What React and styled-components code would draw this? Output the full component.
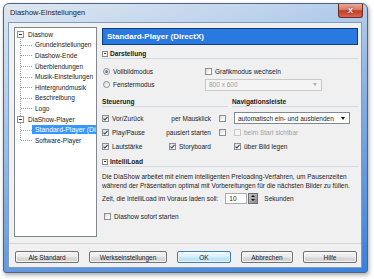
import styled, { createGlobalStyle } from 'styled-components';

const GlobalStyle = createGlobalStyle`
  html, body {
    margin: 0;
    padding: 0;
    background: #ffffff;
  }
  body {
    font-family: 'Liberation Sans', Arial, sans-serif;
    font-size: 6.5px;
    color: #1a1a1a;
  }
  * {
    box-sizing: border-box;
  }
`;

const Screen = styled.div`
  width: 374px;
  height: 279px;
  padding: 3px 0 0 3px;
  background: #ffffff;
`;

const Window = styled.div`
  width: 365px;
  height: 270px;
  display: flex;
  flex-direction: column;
  border: 1px solid #4f6581;
  border-radius: 6px 6px 3px 3px;
  background: linear-gradient(165deg, #dfe7f1 0%, #bcd2ec 22%, #80abe2 55%, #3a80da 100%);
  box-shadow: 1px 2px 4px rgba(0, 0, 0, 0.35);
`;

const TitleBar = styled.div`
  height: 18px;
  display: flex;
  align-items: flex-start;
  justify-content: space-between;
  padding-left: 6px;
`;

const TitleText = styled.span`
  font-size: 7.4px;
  line-height: 18px;
  color: #1b1b1b;
`;

const CloseButton = styled.div`
  width: 25px;
  height: 14px;
  margin-right: 4px;
  display: flex;
  align-items: center;
  justify-content: center;
  border: 1px solid #6b2a22;
  border-top: none;
  border-radius: 0 0 3px 3px;
  background: linear-gradient(#e9a896 0%, #d67a66 45%, #c23a28 52%, #d8664f 100%);
  color: #ffffff;
  font-weight: bold;
  font-size: 8px;
  text-shadow: 0 0 2px #6b1a10;
`;

const Client = styled.div`
  width: 354px;
  height: 246px;
  margin-left: 4px;
  display: flex;
  flex-direction: column;
  border: 1px solid #7f9cc2;
  background: #f0f0f0;
`;

const MainArea = styled.div`
  display: flex;
  gap: 5px;
  padding: 4px 3px 0 5px;
`;

/* ---------- tree ---------- */

const Tree = styled.div`
  position: relative;
  width: 83px;
  height: 210px;
  flex-shrink: 0;
  padding-top: 1px;
  background: #ffffff;
  border: 1px solid #828790;
  overflow: hidden;
  &::before {
    content: '';
    position: absolute;
    left: 5px;
    top: 6px;
    height: 106px;
    border-left: 1px dotted #a0a0a0;
  }
`;

const TreeRoot = styled.div`
  position: relative;
  height: 10.6px;
  display: flex;
  align-items: center;
  gap: 4px;
  padding-left: 2px;
  white-space: nowrap;
`;

const ExpandBox = styled.span`
  position: relative;
  z-index: 1;
  width: 7px;
  height: 7px;
  display: inline-flex;
  align-items: center;
  justify-content: center;
  border: 1px solid #919191;
  background: #ffffff;
  &::after {
    content: '';
    width: 3px;
    height: 1px;
    background: #333333;
  }
`;

const TreeLeaf = styled.div`
  position: relative;
  height: 10.6px;
  display: flex;
  align-items: center;
  padding-left: 20px;
  white-space: nowrap;
  &::before {
    content: '';
    position: absolute;
    left: 6px;
    top: 50%;
    width: 11px;
    border-top: 1px dotted #a0a0a0;
  }
`;

const LeafLabel = styled.span`
  display: block;
  flex: 1;
  overflow: hidden;
  line-height: 9px;
  padding: 0 3px;
  margin-left: -3px;
  font-size: ${(p) => (p.$selected ? '6.9px' : 'inherit')};
  background: ${(p) => (p.$selected ? '#3399ff' : 'transparent')};
  color: ${(p) => (p.$selected ? '#ffffff' : '#1a1a1a')};
`;

/* ---------- content ---------- */

const Content = styled.div`
  width: 256px;
  margin-top: 1px;
  display: flex;
  flex-direction: column;
`;

const PageHeader = styled.div`
  height: 17px;
  padding-left: 4px;
  border: 1px solid #0e3f85;
  background: #2a79e0;
  color: #ffffff;
  font-size: 8px;
  font-weight: bold;
  line-height: 15px;
`;

const SectionTitle = styled.div`
  height: 10px;
  margin-top: ${(p) => p.$mt || 0}px;
  display: flex;
  align-items: center;
  gap: 2px;
  border-bottom: 1px solid #d2d8e0;
  font-size: 6.6px;
  font-weight: bold;
  color: #1a1a1a;
`;

const SmallBox = styled.span`
  width: 6px;
  height: 6px;
  display: inline-flex;
  align-items: center;
  justify-content: center;
  border: 1px solid #8a8a8a;
  background: #ffffff;
  &::after {
    content: '';
    width: 2px;
    height: 1px;
    background: #333333;
  }
`;

const DisplayGrid = styled.div`
  margin-top: 6px;
  display: grid;
  grid-template-columns: 103px 116px;
  grid-auto-rows: 13px;
  align-items: center;
`;

const TwoColumns = styled.div`
  margin-top: 6px;
  display: grid;
  grid-template-columns: 126px 126px;
  column-gap: 4px;
`;

const Column = styled.div`
  display: flex;
  flex-direction: column;
`;

const Rows = styled.div`
  margin-top: 4px;
  display: flex;
  flex-direction: column;
`;

const Row = styled.div`
  height: 14px;
  display: flex;
  align-items: center;
  justify-content: ${(p) => p.$justify || 'flex-start'};
  padding-right: ${(p) => p.$pr || 0}px;
`;

const Item = styled.label`
  display: inline-flex;
  align-items: center;
  gap: 3px;
  width: ${(p) => (p.$w ? `${p.$w}px` : 'auto')};
  margin-left: ${(p) => p.$ml || 0}px;
  color: ${(p) => (p.$disabled ? '#a0a0a0' : '#1a1a1a')};
  white-space: nowrap;
`;

const SideLabel = styled.span`
  display: inline-flex;
  align-items: center;
  gap: 8px;
  white-space: nowrap;
`;

const CheckBox = styled.span`
  width: 7px;
  height: 7px;
  flex-shrink: 0;
  display: inline-flex;
  align-items: center;
  justify-content: center;
  border: 1px solid ${(p) => (p.$disabled ? '#c8c8c8' : '#8e8f8f')};
  background: ${(p) =>
    p.$disabled ? '#f4f4f4' : 'linear-gradient(135deg, #d8d8d8 0%, #f6f6f6 60%, #ffffff 100%)'};
`;

const RadioCircle = styled.span`
  width: 7px;
  height: 7px;
  flex-shrink: 0;
  display: inline-flex;
  align-items: center;
  justify-content: center;
  border: 1px solid #8e8f8f;
  border-radius: 50%;
  background: linear-gradient(135deg, #d8d8d8 0%, #ffffff 100%);
  &::after {
    content: '';
    display: ${(p) => (p.$checked ? 'block' : 'none')};
    width: 3px;
    height: 3px;
    border-radius: 50%;
    background: radial-gradient(circle at 35% 35%, #8aa6c8, #2c4a78);
  }
`;

const Select = styled.div`
  width: ${(p) => p.$w}px;
  height: 12px;
  margin-left: ${(p) => p.$ml || 0}px;
  display: flex;
  align-items: center;
  justify-content: space-between;
  padding: 0 4px 0 3px;
  border: 1px solid ${(p) => (p.$disabled ? '#c9c9c9' : '#7f8a99')};
  background: ${(p) => (p.$disabled ? '#f4f4f4' : '#ffffff')};
  color: ${(p) => (p.$disabled ? '#9a9a9a' : '#1a1a1a')};
  white-space: nowrap;
`;

const Arrow = styled.span`
  width: 0;
  height: 0;
  border-left: 2.5px solid transparent;
  border-right: 2.5px solid transparent;
  border-top: 3px solid ${(p) => (p.$disabled ? '#b0b0b0' : '#1a1a1a')};
`;

const Paragraph = styled.p`
  margin: 5px 0 0;
  line-height: 9px;
`;

const TimeRow = styled.div`
  margin-top: 2px;
  height: 12px;
  display: flex;
  align-items: center;
`;

const NumberBox = styled.div`
  width: 22px;
  height: 11px;
  margin-left: 7px;
  padding-left: 3px;
  border: 1px solid #abadb3;
  background: #ffffff;
  line-height: 9px;
`;

const Spinner = styled.div`
  width: 10px;
  height: 11px;
  margin-left: 1px;
  display: flex;
  flex-direction: column;
  border: 1px solid #707070;
  background: linear-gradient(135deg, #c8c8c8, #8a8a8a);
`;

const SpinHalf = styled.span`
  flex: 1;
  display: flex;
  align-items: center;
  justify-content: center;
  &::after {
    content: '';
    border-left: 2px solid transparent;
    border-right: 2px solid transparent;
    ${(p) => (p.$up ? 'border-bottom: 2px solid #111;' : 'border-top: 2px solid #111;')}
  }
`;

const Unit = styled.span`
  margin-left: 6px;
`;

const StartRow = styled.div`
  margin-top: 6px;
  height: 12px;
  padding-left: 2px;
  display: flex;
  align-items: center;
`;

/* ---------- buttons ---------- */

const Separator = styled.div`
  height: 1px;
  margin-top: 6px;
  background: #d5d5d5;
`;

const ButtonBar = styled.div`
  display: flex;
  gap: 10px;
  padding: 7px 0 0 6px;
`;

const Button = styled.button`
  width: ${(p) => p.$w}px;
  height: 12px;
  padding: 0;
  font-family: inherit;
  font-size: 6.5px;
  color: #1a1a1a;
  border: 1px solid ${(p) => (p.$default ? '#3c7fb1' : '#707070')};
  border-radius: 2px;
  background: ${(p) =>
    p.$default
      ? 'linear-gradient(#eaf6fd 0%, #dcf1fc 50%, #c6e9fc 50%, #b4dff7 100%)'
      : 'linear-gradient(#f3f3f3 0%, #ebebeb 50%, #dddddd 50%, #cfcfcf 100%)'};
  box-shadow: inset 0 0 0 1px rgba(255, 255, 255, 0.75);
`;

function Check({ checked, disabled, children, w, ml }) {
  return (
    <Item $w={w} $ml={ml} $disabled={disabled}>
      <CheckBox $disabled={disabled}>
        {checked && (
          <svg width="5" height="5" viewBox="0 0 5 5">
            <path d="M0.5 2.6 L1.9 4 L4.5 0.8" fill="none" stroke="#2c3d6b" strokeWidth="1.1" />
          </svg>
        )}
      </CheckBox>
      {children}
    </Item>
  );
}

function Radio({ checked, children }) {
  return (
    <Item $ml={1}>
      <RadioCircle $checked={checked} />
      {children}
    </Item>
  );
}

const diashowChildren = [
  'Grundeinstellungen',
  'Diashow-Ende',
  'Überblendungen',
  'Musik-Einstellungen',
  'Hintergrundmusik',
  'Beschreibung',
  'Logo',
];

export default function App() {
  return (
    <>
      <GlobalStyle />
      <Screen>
        <Window>
          <TitleBar>
            <TitleText>Diashow-Einstellungen</TitleText>
            <CloseButton>X</CloseButton>
          </TitleBar>
          <Client>
            <MainArea>
              <Tree>
                <TreeRoot>
                  <ExpandBox />
                  Diashow
                </TreeRoot>
                {diashowChildren.map((name) => (
                  <TreeLeaf key={name}>
                    <LeafLabel>{name}</LeafLabel>
                  </TreeLeaf>
                ))}
                <TreeRoot>
                  <ExpandBox />
                  DiaShow-Player
                </TreeRoot>
                <TreeLeaf>
                  <LeafLabel $selected>Standard-Player (DirectX)</LeafLabel>
                </TreeLeaf>
                <TreeLeaf>
                  <LeafLabel>Software-Player</LeafLabel>
                </TreeLeaf>
              </Tree>

              <Content>
                <PageHeader>Standard-Player (DirectX)</PageHeader>

                <SectionTitle $mt={4}>
                  <SmallBox />
                  Darstellung
                </SectionTitle>
                <DisplayGrid>
                  <Radio checked>Vollbildmodus</Radio>
                  <Check>Grafikmodus wechseln</Check>
                  <Radio>Fenstermodus</Radio>
                  <Select $w={117} $disabled>
                    800 x 600
                    <Arrow $disabled />
                  </Select>
                </DisplayGrid>

                <TwoColumns>
                  <Column>
                    <SectionTitle>Steuerung</SectionTitle>
                    <Rows>
                      <Row $justify="space-between" $pr={2}>
                        <Check checked>Vor/Zurück</Check>
                        <SideLabel>
                          per Mausklick
                          <CheckBox />
                        </SideLabel>
                      </Row>
                      <Row $justify="space-between" $pr={2}>
                        <Check checked>Play/Pause</Check>
                        <SideLabel>
                          pausiert starten
                          <CheckBox />
                        </SideLabel>
                      </Row>
                      <Row>
                        <Check checked w={67}>
                          Lautstärke
                        </Check>
                        <Check checked>Storyboard</Check>
                      </Row>
                    </Rows>
                  </Column>
                  <Column>
                    <SectionTitle>Navigationsleiste</SectionTitle>
                    <Rows>
                      <Row>
                        <Select $w={116} $ml={2}>
                          automatisch ein- und ausblenden
                          <Arrow />
                        </Select>
                      </Row>
                      <Row>
                        <Check disabled ml={2}>
                          beim Start sichtbar
                        </Check>
                      </Row>
                      <Row>
                        <Check checked ml={2}>
                          über Bild legen
                        </Check>
                      </Row>
                    </Rows>
                  </Column>
                </TwoColumns>

                <SectionTitle $mt={4}>
                  <SmallBox />
                  IntelliLoad
                </SectionTitle>
                <Paragraph>
                  Die DiaShow arbeitet mit einem intelligenten Preloading-Verfahren, um Pausenzeiten
                  <br />
                  während der Präsentation optimal mit Vorbereitungen für die nächsten Bilder zu füllen.
                </Paragraph>
                <TimeRow>
                  Zeit, die IntelliLoad im Voraus laden soll:
                  <NumberBox>10</NumberBox>
                  <Spinner>
                    <SpinHalf $up />
                    <SpinHalf />
                  </Spinner>
                  <Unit>Sekunden</Unit>
                </TimeRow>
                <StartRow>
                  <Check>Diashow sofort starten</Check>
                </StartRow>
              </Content>
            </MainArea>

            <Separator />
            <ButtonBar>
              <Button $w={64}>Als Standard</Button>
              <Button $w={78}>Werkseinstellungen</Button>
              <Button $w={54} $default>
                OK
              </Button>
              <Button $w={52}>Abbrechen</Button>
              <Button $w={54}>Hilfe</Button>
            </ButtonBar>
          </Client>
        </Window>
      </Screen>
    </>
  );
}
